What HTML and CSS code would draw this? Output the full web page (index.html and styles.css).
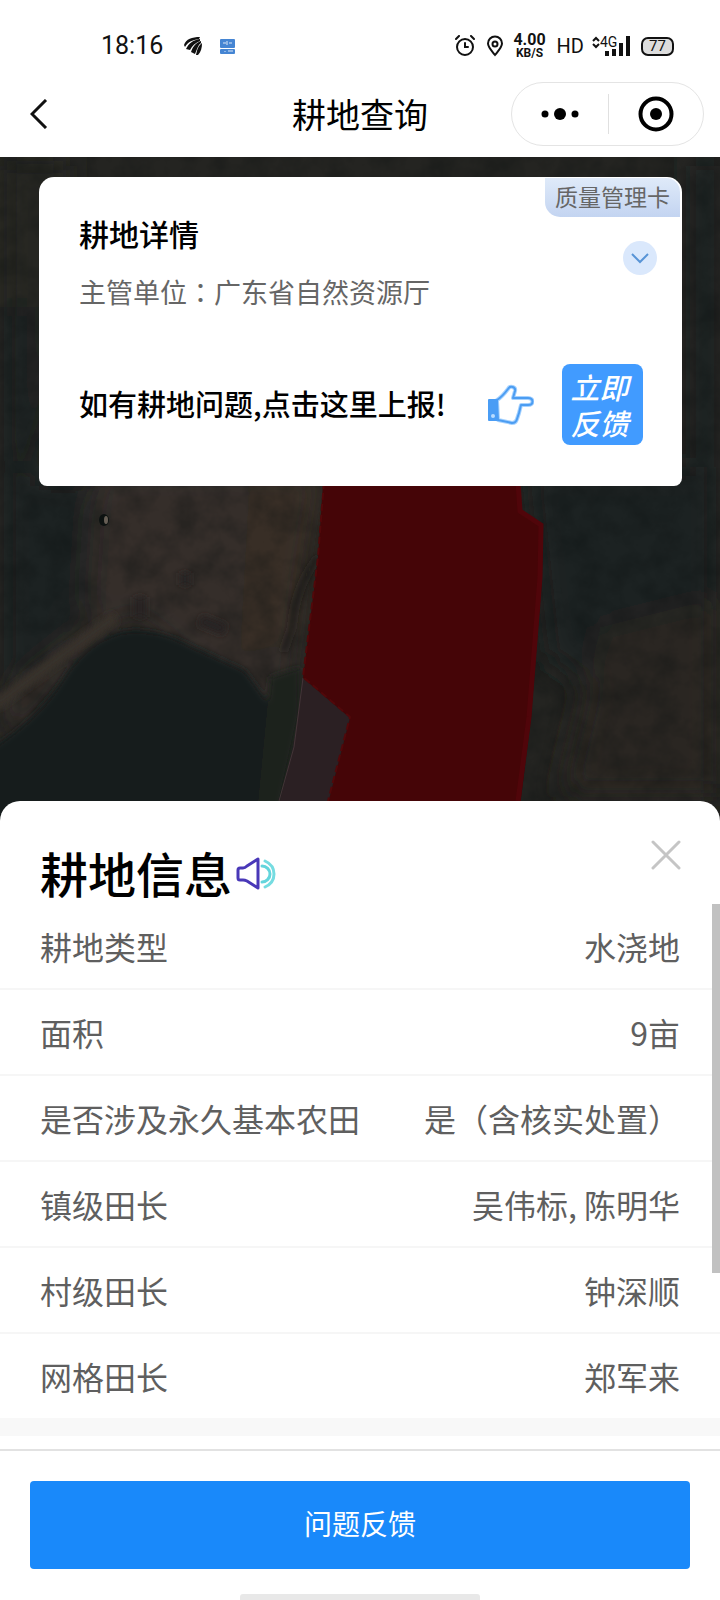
FILE: index.html
```html
<!DOCTYPE html>
<html lang="zh-CN">
<head>
<meta charset="utf-8">
<meta name="viewport" content="width=device-width, initial-scale=1">
<title>耕地查询</title>
<link rel="stylesheet" href="styles.css">
</head>
<body>
<div class="app">
  <div class="status">
    <span class="status-time">18:16</span>
    <svg class="status-app" width="20" height="22" viewBox="0 0 20 22" aria-hidden="true">
      <g fill="#111">
        <path d="M1 10C3 4 9 2 17 2L16 4C9 5 5 7 2 12Z"/>
        <path d="M3 14C6 8 10 5 17 4L17 6C12 8 9 11 7 15Z"/>
        <path d="M8 17C10 11 13 8 18 6L18 8C15 10 14 14 12 19Z"/>
        <path d="M13 20C14 15 15 11 19 8C19 13 18 17 15 20Z"/>
      </g>
    </svg>
    <svg width="15" height="15" viewBox="0 0 15 15" aria-hidden="true">
      <rect width="15" height="9" rx="1" fill="#4585d3"/><rect y="10" width="15" height="5" rx="1" fill="#4585d3"/>
      <path d="M3 4H6M9 4H12M7 2V6M5 12V13M8 12H13" stroke="#dce8f8" stroke-width="1" fill="none"/>
    </svg>
    <div class="status-right">
      <svg width="20" height="22" viewBox="0 0 20 22" fill="none" stroke="#111" stroke-width="2" stroke-linecap="round" aria-hidden="true">
        <circle cx="10" cy="12" r="8"/><path d="M10 8V12H13M1 4L4 1M19 4L16 1"/>
      </svg>
      <svg class="pin" width="18" height="22" viewBox="0 0 18 22" fill="none" stroke="#111" stroke-width="2" aria-hidden="true">
        <path d="M9 20C5 15 2 12 2 8.500A7 7 0 0 1 16 8.500C16 12 13 15 9 20Z"/><circle cx="9" cy="9" r="2.500"/>
      </svg>
      <span class="speed"><b>4.00</b><small>KB/S</small></span>
      <span class="hd">HD</span>
      <span class="signal">
        <svg width="38" height="22" viewBox="0 0 38 22" aria-hidden="true">
          <path d="M1 6L4 3L7 6M1 9L4 12L7 9" fill="none" stroke="#111" stroke-width="2"/>
          <path d="M13 16H17V21H13ZM20 14H24V21H20ZM27 8H31V21H27ZM34 1H38V21H34Z" fill="#111"/>
        </svg>
        <span class="signal-label">4G</span>
      </span>
      <span class="battery">77</span>
    </div>
  </div>

  <header class="nav">
    <button class="back" aria-label="返回">
      <svg width="18" height="30" viewBox="0 0 18 30" fill="none" stroke="#111" stroke-width="3" aria-hidden="true"><path d="M16 1L2 15L16 29"/></svg>
    </button>
    <h1 class="nav-title">耕地查询</h1>
    <div class="capsule">
      <button aria-label="更多">
        <svg width="40" height="14" viewBox="0 0 40 14" aria-hidden="true"><circle cx="5" cy="7" r="3.500"/><circle cx="20" cy="7" r="6"/><circle cx="35" cy="7" r="3.500"/></svg>
      </button>
      <button aria-label="关闭小程序">
        <svg width="36" height="36" viewBox="0 0 36 36" aria-hidden="true"><circle cx="18" cy="18" r="15.500" fill="none" stroke="#000" stroke-width="4"/><circle cx="18" cy="18" r="6"/></svg>
      </button>
    </div>
  </header>

  <main class="stage">
    <svg class="map" viewBox="0 0 720 674" preserveAspectRatio="xMidYMin slice" aria-hidden="true">
      <defs>
        <filter id="soft" x="-20%" y="-20%" width="140%" height="140%"><feGaussianBlur stdDeviation="14"/></filter>
        <filter id="edge"><feGaussianBlur stdDeviation="3"/></filter>
        <filter id="grain" x="0" y="0" width="100%" height="100%" color-interpolation-filters="sRGB">
          <feTurbulence type="fractalNoise" baseFrequency="0.040" numOctaves="4" seed="8"/>
          <feColorMatrix values="0 0 0 0 0.040  0 0 0 0 0.060  0 0 0 0 0.060  2 0 0 0 -0.700"/>
        </filter>
      </defs>
      <rect width="720" height="674" fill="#242421"/>
      <g filter="url(#soft)">
        <path d="M0 0H70V180L40 300H0Z" fill="#272624"/>
        <path d="M0 150H35V320H90L95 420L70 480L0 540Z" fill="#1b2322"/>
        <path d="M95 310H325L310 420L290 590L180 500L130 460L0 600V540L85 470Z" fill="#342f2a"/>
        <path d="M250 320H325L300 480L240 500Z" fill="#382e26"/>
        <path d="M525 310H720V520L640 560L545 500Z" fill="#1b2322"/>
        <path d="M690 0H720V360H690Z" fill="#1e2421"/>
        <path d="M600 470L720 440V640H560Z" fill="#292522"/>
      </g>
      <rect width="720" height="674" filter="url(#grain)" opacity="0.300"/>
      <g filter="url(#edge)">
        <path d="M-10 592Q40 560 65 518Q88 482 125 474Q155 470 190 488L245 513L268 545L280 590L270 680H-10Z" fill="#131b1b"/>
        <path d="M-5 548L60 500L115 460" fill="none" stroke="#39322c" stroke-width="12"/>
        <path d="M318 400Q295 430 292 470L283 495" fill="none" stroke="#1f1f1d" stroke-width="4"/>
        <path d="M140 440V460M180 422H190M200 463L225 473" fill="none" stroke="#252121" stroke-width="12"/>
        <path d="M270 520L300 510L300 560L275 674H255Z" fill="#1c201e"/>
      </g>
      <path d="M303 521L350 560L321 674H272L294 590Z" fill="#2b2023"/>
      <path d="M303 521L294 590L279 644" fill="none" stroke="#443438"/>
      <path d="M325 300H518L520 354L543 368L542 420L531 560L517 674H321L350 561L303 521L318 400Z" fill="#450507"/>
      <path d="M518 325L520 354L541 368L540 420L529 560L518 644" fill="none" stroke="#50050a" stroke-width="5"/>
      <path d="M324 325L318 400L303 520L350 560L328 644" fill="none" stroke="#51080a" stroke-width="2" stroke-dasharray="7 4"/>
      <ellipse cx="104" cy="363" rx="5" ry="6" fill="#0d1211"/><ellipse cx="106" cy="363" rx="2" ry="4" fill="#665e55"/>
    </svg>

    <section class="card">
      <button class="badge">质量管理卡</button>
      <div class="card-top">
        <div>
          <h2 class="card-title">耕地详情</h2>
          <p class="card-sub">主管单位<span class="colon" lang="zh-Hant">：</span>广东省自然资源厅</p>
        </div>
        <button class="expand" aria-label="展开">
          <svg width="18" height="12" viewBox="0 0 18 12" fill="none" stroke="#5894d6" stroke-width="2" aria-hidden="true"><path d="M1 2L9 10L17 2"/></svg>
        </button>
      </div>
      <div class="report">
        <p class="report-text">如有耕地问题,点击这里上报!</p>
        <svg class="hand" width="48" height="42" viewBox="0 0 48 42" aria-hidden="true">
          <path d="M11 16C16 13 19 9 22 5C24 1 30 3 29 7L27 14H42C48 14 48 21 42 21H35L34 25L33 29L31 35Q30 39 26 39L12 36Z" fill="#fff" stroke="#a6d2ff" stroke-width="4" stroke-linejoin="round"/>
          <path d="M11 16C16 13 19 9 22 5C24 1 30 3 29 7L27 14H42C48 14 48 21 42 21H35L34 25L33 29L31 35Q30 39 26 39L12 36Z" fill="none" stroke="#4c9df2" stroke-width="2" stroke-linejoin="round"/>
          <rect x="2" y="15" width="10" height="22" rx="1" fill="#4a9df5"/>
          <circle cx="7" cy="32" r="2" fill="#b9dcff"/>
        </svg>
        <button class="now">立即<br>反馈</button>
      </div>
    </section>
  </main>

  <section class="sheet">
    <header class="sheet-head">
      <h2 class="sheet-title">耕地信息</h2>
      <button class="sound" aria-label="语音播报">
        <svg width="42" height="36" viewBox="0 0 42 36" fill="none" stroke-linecap="round" stroke-linejoin="round" aria-hidden="true">
          <path d="M3 14Q3 12 5 12H8Q10 12 12 10L23 3V32L12 25Q10 24 8 24H5Q3 24 3 22Z" stroke="#4938b8" stroke-width="3"/>
          <path d="M27 10A8 8 0 0 1 27 26" stroke="#63d5dc" stroke-width="3"/>
          <path d="M30 5Q39 9 39 18T30 31" stroke="#75dce1" stroke-width="3"/>
        </svg>
      </button>
      <button class="close" aria-label="关闭">
        <svg width="30" height="30" viewBox="0 0 30 30" stroke="#c5c5c5" stroke-width="3" stroke-linecap="round" aria-hidden="true"><path d="M2 2L28 28M28 2L2 28"/></svg>
      </button>
    </header>
    <div class="list">
      <dl class="rows">
        <div class="row"><dt>耕地类型</dt><dd>水浇地</dd></div>
        <div class="row"><dt>面积</dt><dd>9亩</dd></div>
        <div class="row"><dt>是否涉及永久基本农田</dt><dd>是（含核实处置）</dd></div>
        <div class="row"><dt>镇级田长</dt><dd>吴伟标, 陈明华</dd></div>
        <div class="row"><dt>村级田长</dt><dd>钟深顺</dd></div>
        <div class="row"><dt>网格田长</dt><dd>郑军来</dd></div>
      </dl>
      <span class="thumb"></span>
    </div>
    <footer class="foot">
      <button class="submit">问题反馈</button>
      <span class="home"></span>
    </footer>
  </section>
</div>
</body>
</html>
```

FILE: styles.css
```css
* { box-sizing: border-box; }
body, h1, h2, p, dl, dd { margin: 0; }
body {
  font-family: "Noto Sans CJK SC", sans-serif;
  color: #000;
  background: #fff;
}
button {
  display: flex;
  align-items: center;
  justify-content: center;
  padding: 0;
  border: 0;
  background: none;
  font-family: inherit;
  color: inherit;
}
svg { display: block; flex: none; }

.app { display: flex; flex-direction: column; min-height: 100vh; }

.status {
  display: flex;
  align-items: center;
  height: 70px;
  padding: 22px 46px 0 101px;
  font-family: Roboto, sans-serif;
  color: #111;
}
.status-time { font-size: 25px; line-height: 30px; }
.status-app { margin: 0 17px 0 20px; }
.status-right { display: flex; align-items: center; margin-left: auto; }
.pin { margin: 0 9px 0 11px; }
.speed { display: flex; flex-direction: column; align-items: center; }
.speed b { font-size: 16px; line-height: 14px; }
.speed small { font-size: 12px; line-height: 12px; font-weight: 700; }
.hd { margin: 0 8px 0 11px; font-size: 20px; line-height: 24px; }
.signal { position: relative; margin-right: 11px; }
.signal-label { position: absolute; left: 8px; top: 0; font-size: 14px; line-height: 14px; background: #fff; }
.battery {
  width: 33px;
  height: 19px;
  border: 2px solid #111;
  border-radius: 7px;
  background: #ddd;
  font-size: 15px;
  line-height: 15px;
  text-align: center;
}

.nav {
  display: grid;
  grid-template-columns: 1fr auto 1fr;
  align-items: center;
  height: 87px;
  padding: 0 16px 0 30px;
}
.back { justify-self: start; }
.nav-title { padding-right: 14px; font-size: 34px; line-height: 44px; font-weight: 400; }
.capsule {
  display: grid;
  grid-template-columns: 1fr 1fr;
  justify-self: end;
  width: 193px;
  height: 64px;
  border: 1px solid #e4e4e4;
  border-radius: 32px;
}
.capsule button { height: 40px; align-self: center; }
.capsule button + button { border-left: 1px solid #e0e0e0; }

.stage {
  position: relative;
  flex: 1;
  padding: 20px 38px 336px 39px;
  background: #242421;
}
.map { position: absolute; inset: 0; width: 100%; height: 100%; }

.card {
  position: relative;
  padding: 34px 39px 41px 40px;
  border-radius: 15px 15px 8px 8px;
  background: #fff;
}
.badge {
  position: absolute;
  top: 1px;
  right: 2px;
  width: 135px;
  height: 39px;
  padding-bottom: 4px;
  border-radius: 0 14px 0 15px;
  background: linear-gradient(#dfeaf9, #c3d4f1);
  font-size: 23px;
  line-height: 32px;
  color: #666;
}
.card-top { display: flex; justify-content: space-between; align-items: center; }
.card-title { font-size: 30px; line-height: 44px; font-weight: 500; }
.card-sub { margin-top: 17px; font-size: 27px; line-height: 40px; color: #666; }
.colon { font-family: "Noto Sans CJK TC", sans-serif; }
.expand {
  width: 34px;
  height: 34px;
  margin: 0 -14px 8px 0;
  border-radius: 50%;
  background: #dae8fc;
}
.report { display: flex; align-items: center; margin-top: 52px; }
.report-text { padding-bottom: 4px; font-size: 29px; line-height: 40px; font-weight: 500; }
.hand { margin: 0 28px 0 auto; }
.now {
  width: 81px;
  height: 81px;
  padding: 0 6px 2px 0;
  border-radius: 8px;
  background: #419bff;
  font-size: 29px;
  line-height: 36px;
  font-weight: 500;
  font-style: italic;
  color: #fff;
}

.sheet {
  position: relative;
  margin-top: -24px;
  border-radius: 20px 20px 0 0;
  background: #fff;
}
.sheet-head { display: flex; align-items: center; padding: 39px 39px 0 40px; }
.sheet-title { font-size: 48px; line-height: 64px; font-weight: 500; }
.sound { margin-left: 3px; padding-top: 4px; }
.close { align-self: flex-start; margin-left: auto; }
.list { position: relative; }
.rows { border-bottom: 18px solid #f8f8f8; }
.row {
  display: flex;
  justify-content: space-between;
  align-items: center;
  height: 86px;
  padding: 0 40px;
  border-bottom: 2px solid #f6f6f6;
  font-size: 32px;
  line-height: 48px;
  color: #5f5f5f;
}
.row:last-child { height: 84px; border-bottom: 0; }
.thumb {
  position: absolute;
  top: 0;
  right: 0;
  width: 8px;
  height: 369px;
  background: #c1c1c1;
}
.foot {
  display: flex;
  flex-direction: column;
  align-items: center;
  gap: 25px;
  margin-top: 13px;
  padding: 30px 30px 0;
  border-top: 2px solid #e2e2e2;
}
.submit {
  width: 100%;
  height: 88px;
  padding-bottom: 4px;
  border-radius: 4px;
  background: #1989fa;
  font-size: 28px;
  line-height: 40px;
  color: #fff;
}
.home { width: 240px; height: 6px; border-radius: 3px 3px 0 0; background: #e8e8e8; }
```
